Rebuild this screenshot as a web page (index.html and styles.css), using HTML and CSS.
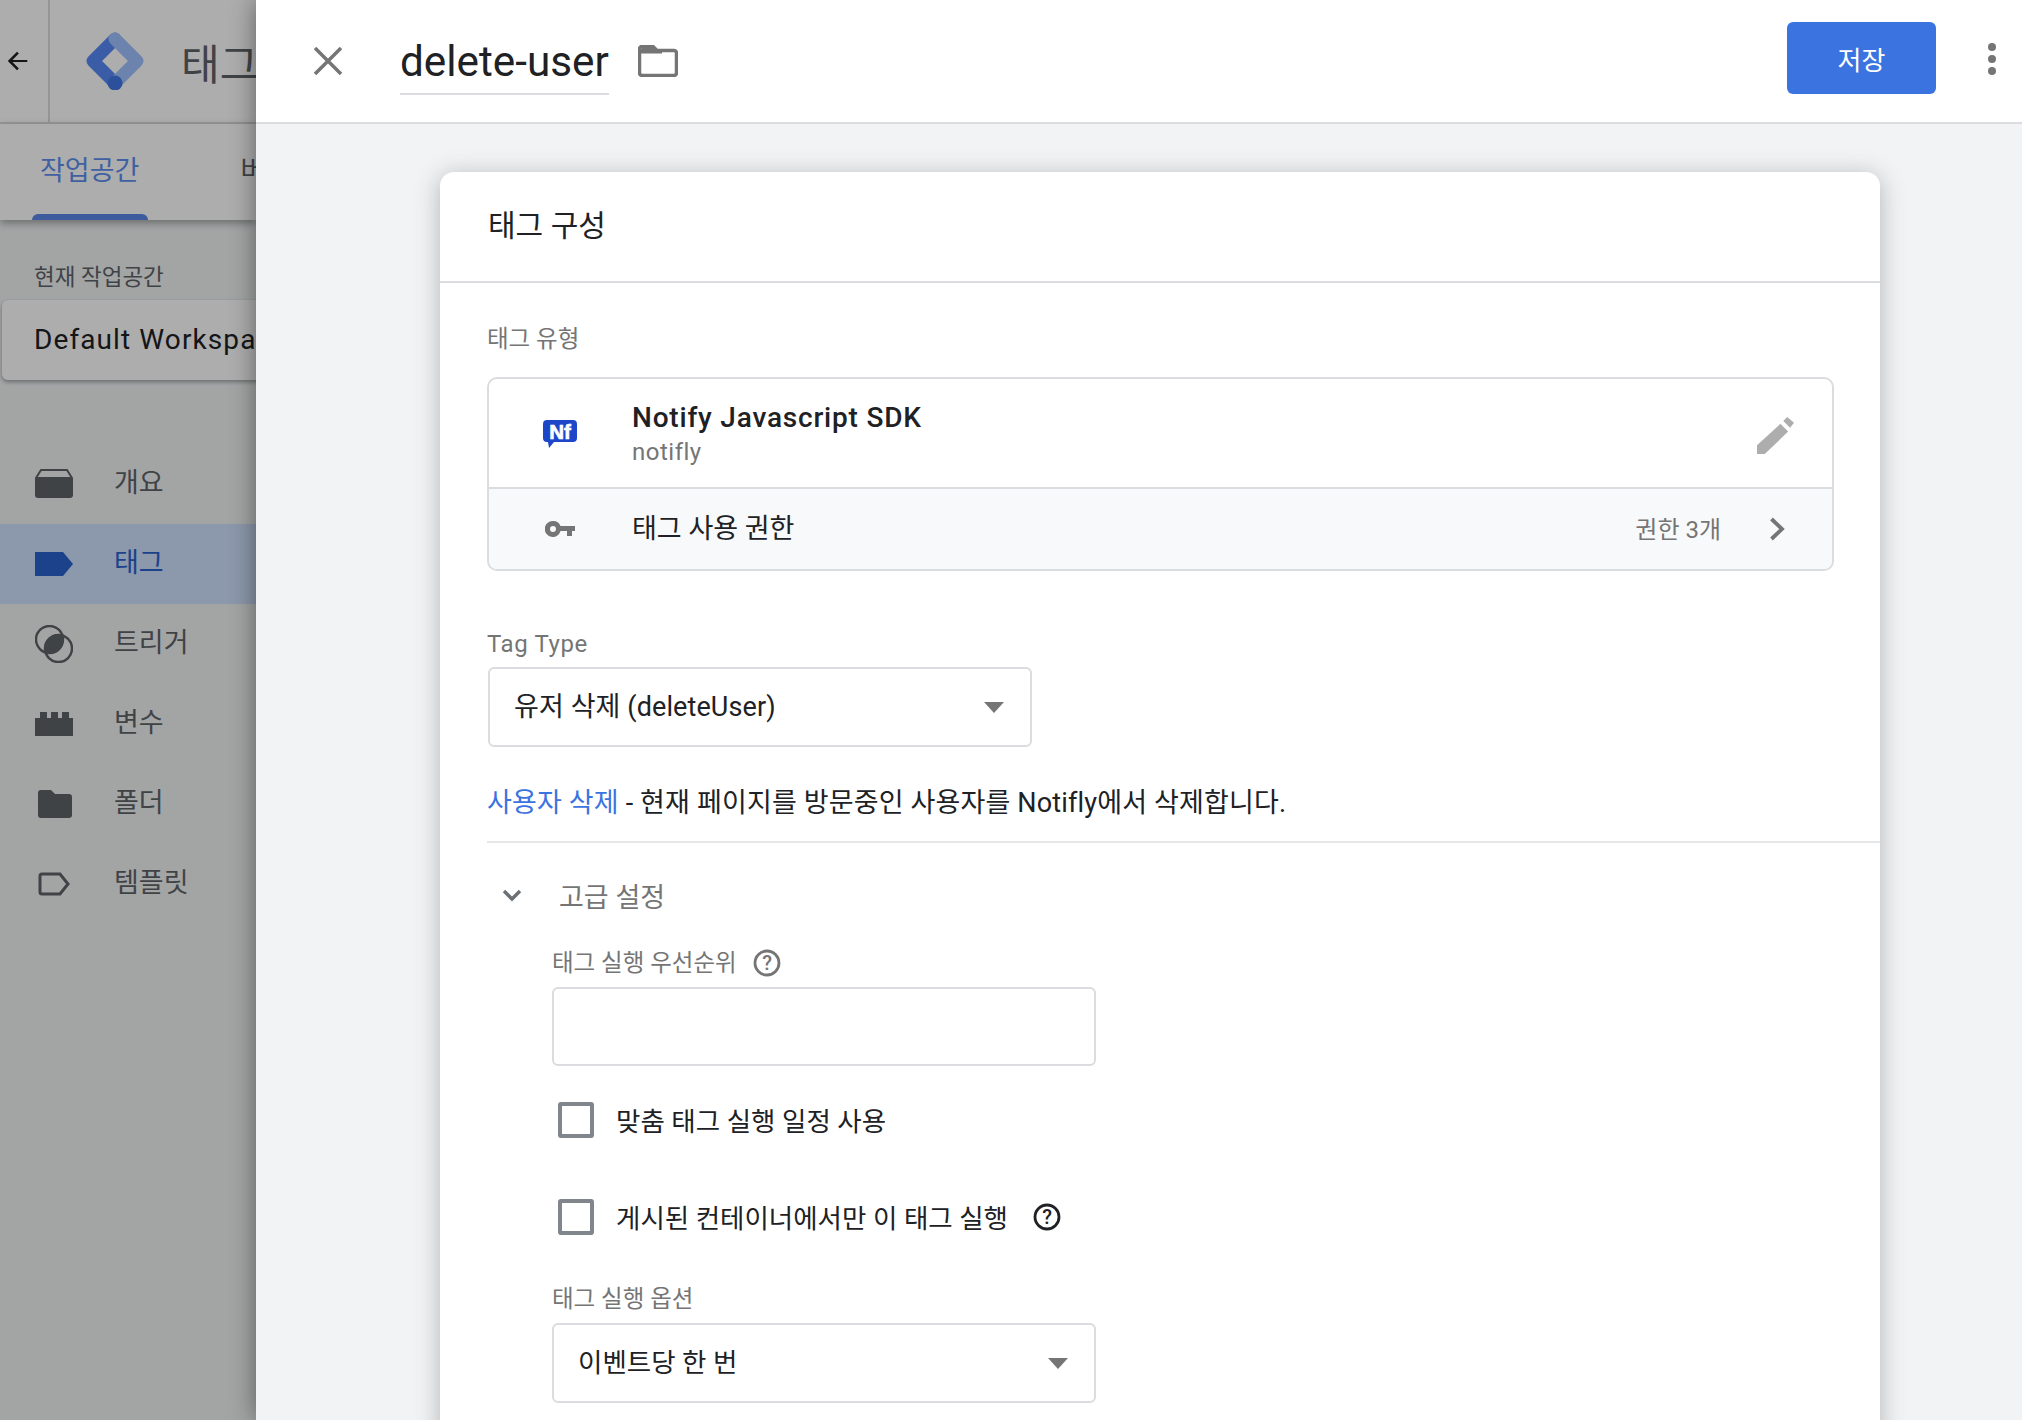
FILE: index.html
```html
<!DOCTYPE html>
<html lang="ko">
<head>
<meta charset="utf-8">
<title>delete-user</title>
<link rel="stylesheet" href="styles.css">
</head>
<body>
<div class="app">
  <aside class="side">
    <div class="top">
      <div class="back"><svg width="26" height="26" viewBox="0 0 24 24"><path d="M21.500 11H7.800l5.900-5.900L12 3.500 3.500 12l8.500 8.500 1.700-1.600L7.800 13h13.700z" fill="#202124"/></svg></div>
      <svg class="logo" width="58" height="58" viewBox="0 0 58 58"><path d="M29 7L7 29L29 51" fill="none" stroke="#588af7" stroke-width="13" stroke-linecap="round" stroke-linejoin="round"/><path d="M29 7L51 29L29 51" fill="none" stroke="#9fc2ff" stroke-width="13" stroke-linecap="round" stroke-linejoin="round"/><circle cx="29" cy="51" r="7.500" fill="#4176e5"/></svg>
      <div class="title">태그 관리자</div>
    </div>
    <div class="tabs">
      <div class="tab on">작업공간<span class="bar"></span></div>
      <div class="tab">버전</div>
    </div>
    <div class="ws-label">현재 작업공간</div>
    <div class="ws-card">Default Workspace</div>
    <nav class="nav">
      <div class="item"><svg width="38" height="30" viewBox="0 0 38 30"><path d="M6 1h26l5 8H1z" fill="none" stroke="#5f6368" stroke-width="2"/><path d="M0 9h38v17a3 3 0 0 1-3 3H3a3 3 0 0 1-3-3z" fill="#5f6368"/></svg><span>개요</span></div>
      <div class="item act"><svg width="38" height="24" viewBox="0 0 38 24"><path d="M0 0h28l10 12-10 12H0z" fill="#2a62cf"/></svg><span>태그</span></div>
      <div class="item"><svg width="38" height="38" viewBox="0 0 38 38"><circle cx="14.500" cy="14.500" r="13.500" fill="none" stroke="#5f6368" stroke-width="2.500"/><circle cx="23.500" cy="23.500" r="13.500" fill="none" stroke="#5f6368" stroke-width="2.500"/><path d="M27.820 10.180A14 14 0 0 0 10.180 27.820A14 14 0 0 0 27.820 10.180z" fill="#5f6368"/></svg><span>트리거</span></div>
      <div class="item"><svg width="38" height="24" viewBox="0 0 38 24"><path d="M0 6h5V0h7v6h4V0h7v6h4V0h7v6h4v18H0z" fill="#5f6368"/></svg><span>변수</span></div>
      <div class="item"><svg class="narrow" width="34" height="28" viewBox="0 0 34 28"><path d="M3 0h10l4 4h14a3 3 0 0 1 3 3v18a3 3 0 0 1-3 3H3a3 3 0 0 1-3-3V3a3 3 0 0 1 3-3z" fill="#5f6368"/></svg><span>폴더</span></div>
      <div class="item"><svg class="narrow" width="32" height="24" viewBox="0 0 32 24"><path d="M4 2h18l8 10-8 10H4a2 2 0 0 1-2-2V4a2 2 0 0 1 2-2z" fill="none" stroke="#5f6368" stroke-width="3"/></svg><span>템플릿</span></div>
    </nav>
    <div class="scrim"></div>
  </aside>
  <main class="panel">
    <header class="head">
      <svg class="close" width="28" height="28" viewBox="0 0 28 28"><path d="M1 1l26 26M27 1L1 27" stroke="#757575" stroke-width="3.500" fill="none"/></svg>
      <div class="name">delete-user</div>
      <svg class="folder" width="40" height="32" viewBox="0 0 40 32"><path d="M4 1.500h11l4 4h17a2.500 2.500 0 0 1 2.500 2.500v20a2.500 2.500 0 0 1-2.500 2.500H4A2.500 2.500 0 0 1 1.500 28V4A2.500 2.500 0 0 1 4 1.500z" fill="none" stroke="#757575" stroke-width="3.500"/><path d="M4 1.500h11l4 4h5v3H2z" fill="#757575"/></svg>
      <div class="grow"></div>
      <button class="save">저장</button>
      <div class="dots"><i></i><i></i><i></i></div>
    </header>
    <div class="body">
      <section class="card">
        <div class="card-title">태그 구성</div>
        <div class="card-body">
          <div class="lab lab-type">태그 유형</div>
          <div class="typebox">
            <div class="type-row">
              <svg class="nf" width="34" height="28" viewBox="0 0 34 28"><path d="M4 0h26a4 4 0 0 1 4 4v14a4 4 0 0 1-4 4H11l-5 6-1-6H4a4 4 0 0 1-4-4V4a4 4 0 0 1 4-4z" fill="#1d46c8"/><text x="17" y="18.500" text-anchor="middle" class="nf-t">Nf</text></svg>
              <div class="type-text"><div class="type-name">Notify Javascript SDK</div><div class="type-sub">notifly</div></div>
              <svg class="pencil" width="37" height="37" viewBox="0 0 38 38"><path d="M0 29L24 7l8 8L8 38H0z" fill="#adadad"/><path d="M27 4l4-4 7 6-4 5z" fill="#adadad"/></svg>
            </div>
            <div class="perm-row">
              <svg class="key" width="30" height="16" viewBox="0 0 30 16"><path fill-rule="evenodd" d="M8 0a8 8 0 0 1 7.500 5H30v5h-3v5h-5v-5h-6.500A8 8 0 1 1 8 0zm0 5a3 3 0 1 0 0 6 3 3 0 0 0 0-6z" fill="#757575"/></svg>
              <div class="perm-text">태그 사용 권한</div>
              <div class="perm-count">권한 3개</div>
              <svg class="chev" width="16" height="24" viewBox="0 0 16 24"><path d="M2.500 2L13 12 2.500 22" fill="none" stroke="#757575" stroke-width="3.800"/></svg>
            </div>
          </div>
          <div class="lab lab-tag">Tag Type</div>
          <div class="select sel-a"><span>유저 삭제 (deleteUser)</span><i class="caret"></i></div>
          <p class="desc"><a class="link">사용자 삭제</a> - 현재 페이지를 방문중인 사용자를 Notifly에서 삭제합니다.</p>
          <div class="rule"></div>
          <div class="adv"><svg width="20" height="13" viewBox="0 0 20 13"><path d="M2 2l8 8 8-8" fill="none" stroke="#6b7075" stroke-width="3.400"/></svg><span>고급 설정</span></div>
          <div class="advbody">
            <div class="lab lab-pri">태그 실행 우선순위<svg class="help" width="28" height="28" viewBox="0 0 28 28"><circle cx="14" cy="14" r="12" fill="none" stroke="#757575" stroke-width="2.800"/><text x="14" y="21" text-anchor="middle" class="help-t grey">?</text></svg></div>
            <div class="input"></div>
            <label class="check c1"><i class="box"></i><span>맞춤 태그 실행 일정 사용</span></label>
            <label class="check c2"><i class="box"></i><span>게시된 컨테이너에서만 이 태그 실행</span><svg class="help" width="28" height="28" viewBox="0 0 28 28"><circle cx="14" cy="14" r="12" fill="none" stroke="#202124" stroke-width="2.800"/><text x="14" y="21" text-anchor="middle" class="help-t">?</text></svg></label>
            <div class="lab lab-opt">태그 실행 옵션</div>
            <div class="select sel-b"><span>이벤트당 한 번</span><i class="caret"></i></div>
          </div>
        </div>
      </section>
    </div>
  </main>
</div>
</body>
</html>
```

FILE: styles.css
```css
* { box-sizing: border-box; }
html, body { margin: 0; height: 100%; overflow: hidden; }
body { font-family: Roboto, "Noto Sans CJK KR", sans-serif; color: #202124; background: #fff; }
.app { display: flex; height: 1420px; width: 2022px; overflow: hidden; }

/* left, dimmed application */
.side { position: relative; width: 256px; flex: none; background: #f1f3f4; overflow: hidden; white-space: nowrap; }
.scrim { position: absolute; inset: 0; background: rgba(0,0,0,.32); }
.top { display: flex; align-items: center; width: 600px; height: 124px; background: #fff; border-bottom: 2px solid #e0e0e0; }
.back { display: flex; align-items: center; justify-content: center; width: 50px; height: 122px; border-right: 2px solid #dadce0; padding-right: 14px; }
.logo { margin-left: 36px; }
.title { margin-left: 37px; font-size: 42px; color: #5f6368; }
.tabs { position: relative; display: flex; width: 256px; height: 96px; background: #fff; box-shadow: 0 3px 8px rgba(0,0,0,.35); }
.tab { position: relative; font-size: 27px; line-height: 94px; color: #5f6368; }
.tab.on { margin-left: 40px; width: 100px; color: #5f8fee; }
.tab + .tab { margin-left: 101px; }
.bar { position: absolute; left: -8px; bottom: 0; width: 116px; height: 6px; border-radius: 6px 6px 0 0; background: #5a86e8; }
.ws-label { margin: 43px 0 0 34px; font-size: 22.500px; line-height: 28px; color: #5f6368; }
.ws-card { width: 300px; height: 80px; margin: 9px 0 0 2px; padding-left: 32px; background: #fff; border-radius: 6px; box-shadow: 0 2px 4px rgba(0,0,0,.35); font-size: 28px; letter-spacing: 1.1px; line-height: 79px; color: #202124; }
.nav { margin-top: 64px; }
.item { display: flex; align-items: center; height: 80px; position: relative; padding-left: 35px; font-size: 27px; color: #5f6368; }
.item span { position: absolute; left: 114px; padding-bottom: 8px; }
.item .narrow { margin-left: 3px; }
.item.act { background: #cfe0fc; color: #2a62cf; }

/* right panel */
.panel { position: relative; flex: 1; display: flex; flex-direction: column; min-width: 0; background: #f1f3f4; box-shadow: 0 0 24px rgba(0,0,0,.45); }
.head { display: flex; align-items: center; height: 124px; flex: none; background: #fff; border-bottom: 2px solid #dadce0; }
.close { margin-left: 58px; }
.name { align-self: flex-start; margin: 28px 0 0 58px; height: 67px; line-height: 68px; border-bottom: 2px solid #dadce0; font-size: 42.300px; color: #202124; }
.folder { margin-left: 29px; }
.grow { flex: 1; }
.save { align-self: flex-start; margin-top: 22px; width: 149px; height: 72px; border: 0; border-radius: 6px; background: #3b73e0; color: #fff; font: 26px Roboto, "Noto Sans CJK KR", sans-serif; }
.dots { display: flex; flex-direction: column; gap: 4px; width: 8px; margin: 0 26px 4px 52px; }
.dots i { width: 8px; height: 8px; border-radius: 50%; background: #757575; }
.body { flex: 1; padding: 48px 0 0 184px; overflow: hidden; }
.card { width: 1440px; min-height: 1300px; background: #fff; border-radius: 14px; box-shadow: 0 4px 24px rgba(60,64,67,.35); }
.card-title { height: 111px; padding: 34px 48px 0; border-bottom: 2px solid #dadce0; font-size: 30px; line-height: 40px; }
.card-body { padding-left: 47px; }
.lab { font-size: 23.500px; line-height: 30px; color: #757575; }
.lab-type { padding-top: 41px; height: 94px; }
.typebox { width: 1347px; height: 194px; border: 2px solid #dadce0; border-radius: 10px; overflow: hidden; }
.type-row { display: flex; align-items: center; height: 110px; border-bottom: 2px solid #dadce0; }
.nf { margin: 2px 0 0 54px; }
.nf-t { font: 900 20.500px "Liberation Sans", sans-serif; fill: #fff; stroke: #fff; stroke-width: .7px; }
.type-text { margin-left: 55px; padding-top: 2px; }
.type-name { font-size: 28px; font-weight: 500; line-height: 36px; letter-spacing: .8px; }
.type-sub { font-size: 24px; line-height: 32px; color: #757575; letter-spacing: .5px; }
.pencil { margin: 4px 38px 0 auto; }
.perm-row { display: flex; align-items: center; height: 80px; background: #f8f9fa; }
.key { margin-left: 56px; }
.perm-text { margin-left: 57px; font-size: 27px; padding-bottom: 5px; }
.perm-count { margin-left: auto; font-size: 24px; color: #757575; padding-bottom: 4px; }
.chev { margin: 0 47px 0 48px; }
.lab-tag { margin-top: 58px; height: 38px; font-size: 24px; letter-spacing: .6px; }
.select { position: relative; display: flex; align-items: center; width: 544px; height: 80px; padding-left: 24px; border: 2px solid #dadce0; border-radius: 6px; font-size: 27px; }
.select span { padding-bottom: 5px; }
.sel-a { margin-left: 1px; letter-spacing: .1px; }
.sel-b { font-size: 26.500px; }
.caret { position: absolute; right: 26px; top: 33px; border: 10px solid transparent; border-top: 11px solid #757575; border-bottom: 0; }
.desc { margin: 38.500px 0 0; font-size: 27px; line-height: 34px; letter-spacing: .15px; }
.link { color: #3b73e0; }
.rule { width: 1393px; height: 2px; margin-top: 21.500px; background: #e4e6e8; }
.adv { display: flex; align-items: center; height: 34px; margin-top: 35px; padding-left: 15px; font-size: 27px; color: #757575; }
.adv span { margin-left: 37px; }
.advbody { padding-left: 65px; }
.lab-pri { display: flex; align-items: center; margin-top: 26px; height: 49px; }
.help { margin-left: 16px; flex: none; }
.help-t { font: 500 20px Roboto, sans-serif; fill: #202124; }
.help-t.grey { fill: #757575; }
.input { width: 544px; height: 79px; border: 2px solid #dadce0; border-radius: 6px; }
.check { display: flex; align-items: center; height: 36px; padding-left: 6px; font-size: 26.500px; }
.check span { margin-left: 22px; }
.c1 { margin-top: 35.500px; }
.c2 { margin-top: 61px; }
.c2 .help { margin-left: 25px; }
.box { width: 36px; height: 36px; flex: none; border: 4px solid #80868b; border-radius: 3px; }
.lab-opt { margin-top: 49px; height: 39.500px; }
```
